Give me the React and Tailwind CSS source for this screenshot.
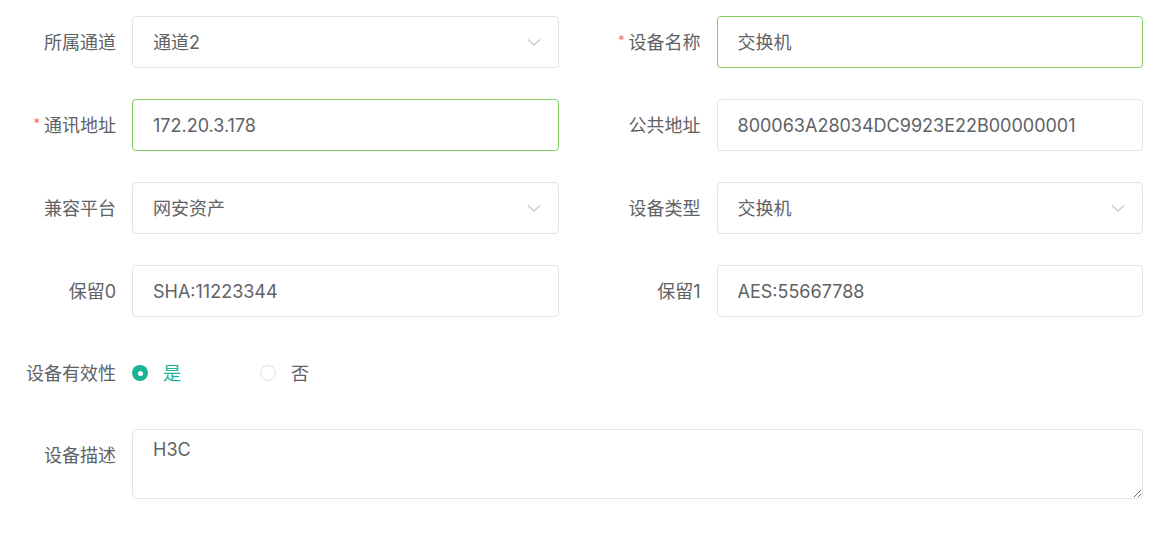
import React from 'react';

const font = { fontFamily: 'Inter, "Noto Sans CJK SC", sans-serif' };

const Chevron = () => (
  <svg width="16" height="16" viewBox="0 0 16 16" fill="none" className="shrink-0">
    <path d="M2 5.5 L8 11 L14 5.5" stroke="#c0c4cc" strokeWidth="1.1" />
  </svg>
);

const Label = ({ children, required }) => (
  <div className="flex h-[52px] w-[132px] shrink-0 items-center justify-end pr-4 text-[#606266]">
    {required && <span className="mr-1 -mt-1 text-[13px] leading-none text-[#f56c6c]">*</span>}
    <span>{children}</span>
  </div>
);

const Field = ({ label, value, required, select, active }) => (
  <div className="flex">
    <Label required={required}>{label}</Label>
    <div
      className={`flex h-[52px] flex-1 items-center rounded border bg-white pl-5 pr-4 text-[#606266] ${
        active ? 'border-[#82d062]' : 'border-[#e2e4ea]'
      }`}
    >
      <span className="flex-1 truncate">{value}</span>
      {select && <Chevron />}
    </div>
  </div>
);

export default function App() {
  return (
    <div className="w-[1143px] bg-white pt-4 text-[18px]" style={font}>
      <div className="grid grid-cols-2 gap-x-[26px] gap-y-[31px]">
        <Field label="所属通道" value="通道2" select />
        <Field label="设备名称" value="交换机" required active />
        <Field label="通讯地址" value="172.20.3.178" required active />
        <Field label="公共地址" value="800063A28034DC9923E22B00000001" />
        <Field label="兼容平台" value="网安资产" select />
        <Field label="设备类型" value="交换机" select />
        <Field label="保留0" value="SHA:11223344" />
        <Field label="保留1" value="AES:55667788" />
      </div>

      <div className="mt-[31px] flex h-[50px] items-center">
        <Label>设备有效性</Label>
        <div className="flex items-center">
          <div className="flex w-[128px] items-center">
            <span className="flex h-4 w-4 items-center justify-center rounded-full bg-[#1ab394]">
              <span className="h-[5px] w-[5px] rounded-full bg-white" />
            </span>
            <span className="ml-[15px] text-[#1ab394]">是</span>
          </div>
          <div className="flex items-center">
            <span className="h-4 w-4 rounded-full border border-[#dcdfe6] bg-white" />
            <span className="ml-[15px] text-[#606266]">否</span>
          </div>
        </div>
      </div>

      <div className="mt-[31px] flex pb-8">
        <Label>设备描述</Label>
        <textarea
          defaultValue="H3C"
          className="h-[70px] flex-1 rounded border border-[#e2e4ea] px-5 pt-[7px] text-[18px] leading-[26px] text-[#606266] outline-none"
          style={font}
        />
      </div>
    </div>
  );
}
